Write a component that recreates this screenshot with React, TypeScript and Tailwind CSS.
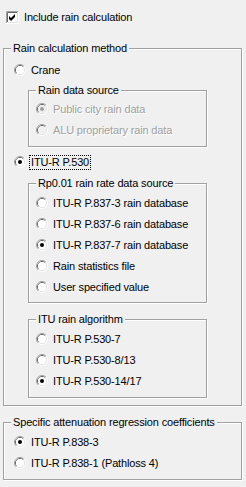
import React from "react";

const font = "font-['Liberation_Sans',Arial,sans-serif] text-[11px] tracking-[-0.15px] leading-[13px]";

const Radio = ({ checked = false, disabled = false }: { checked?: boolean; disabled?: boolean }) => (
  <svg width="13" height="13" viewBox="0 0 13 13" className="shrink-0">
    <path d="M2.11 9.89A5.5 5.5 0 0 1 9.89 2.11" fill="none" stroke="#a0a0a0" />
    <path d="M9.89 2.11A5.5 5.5 0 0 1 2.11 9.89" fill="none" stroke="#ffffff" />
    <path d="M2.82 9.18A4.5 4.5 0 0 1 9.18 2.82" fill="none" stroke="#696969" />
    <path d="M9.18 2.82A4.5 4.5 0 0 1 2.82 9.18" fill="none" stroke="#e3e3e3" />
    <circle cx="6" cy="6" r="4" fill={disabled ? "#f0f0f0" : "#ffffff"} />
    {checked && <circle cx="6" cy="6" r="2" fill={disabled ? "#a0a0a0" : "#000000"} />}
  </svg>
);

const Checkbox = () => (
  <svg width="13" height="13" viewBox="0 0 13 13" className="shrink-0">
    <rect x="0" y="0" width="13" height="13" fill="#ffffff" />
    <path d="M0.5 12V0.5H12" fill="none" stroke="#a0a0a0" />
    <path d="M1.5 11V1.5H11" fill="none" stroke="#696969" />
    <path d="M1.5 11.5H11.5V1" fill="none" stroke="#e3e3e3" />
    <path d="M3 5L5 7L9 3V6L5 10L3 8Z" fill="#000000" />
  </svg>
);

const Option = ({
  label,
  checked,
  disabled,
}: {
  label: string;
  checked?: boolean;
  disabled?: boolean;
}) => (
  <div className="flex items-center h-[21px]">
    <Radio checked={checked} disabled={disabled} />
    <span
      className={`ml-[4px] whitespace-nowrap ${disabled ? "text-[#a0a0a0] [text-shadow:1px_1px_0_#fff]" : "text-black"}`}
    >
      {label}
    </span>
  </div>
);

const Group = ({
  title,
  className,
  children,
}: {
  title: string;
  className: string;
  children: React.ReactNode;
}) => (
  <fieldset
    className={`border border-[#a0a0a0] shadow-[1px_1px_0_#fff,inset_1px_1px_0_#fff] ${className}`}
  >
    <legend className="ml-[7px] px-[2px] bg-[#f0f0f0] whitespace-nowrap">{title}</legend>
    {children}
  </fieldset>
);

export default function App() {
  return (
    <div className={`w-[246px] h-[487px] bg-[#f0f0f0] text-black px-[3px] pt-[7px] overflow-hidden ${font}`}>
      <div className="flex items-center h-[21px] ml-[3px]">
        <Checkbox />
        <span className="ml-[5px] whitespace-nowrap">Include rain calculation</span>
      </div>

      <Group title="Rain calculation method" className="mt-[14px] w-[239px]">
        <div className="pl-[10px] pt-[5px] pb-[7px]">
          <Option label="Crane" />

          <Group title="Rain data source" className="mt-[3px] ml-[14px] w-[179px]">
            <div className="pl-[7px] pt-[2px] pb-[5px]">
              <Option label="Public city rain data" checked disabled />
              <Option label="ALU proprietary rain data" disabled />
            </div>
          </Group>

          <div className="flex items-center h-[21px] mt-[5px]">
            <Radio checked />
            <span className="ml-[2px] px-[1px] border border-dotted border-black whitespace-nowrap">
              ITU-R P.530
            </span>
          </div>

          <Group title="Rp0.01 rain rate data source" className="mt-[4px] ml-[14px] w-[179px]">
            <div className="pl-[7px] pt-[3px] pb-[4px]">
              <Option label="ITU-R P.837-3 rain database" />
              <Option label="ITU-R P.837-6 rain database" />
              <Option label="ITU-R P.837-7 rain database" checked />
              <Option label="Rain statistics file" />
              <Option label="User specified value" />
            </div>
          </Group>

          <Group title="ITU rain algorithm" className="mt-[10px] ml-[14px] w-[179px]">
            <div className="pl-[7px] pt-[3px] pb-[5px]">
              <Option label="ITU-R P.530-7" />
              <Option label="ITU-R P.530-8/13" />
              <Option label="ITU-R P.530-14/17" checked />
            </div>
          </Group>
        </div>
      </Group>

      <Group title="Specific attenuation regression coefficients" className="mt-[10px] w-[239px]">
        <div className="pl-[10px] pt-[3px] pb-[5px]">
          <Option label="ITU-R P.838-3" checked />
          <Option label="ITU-R P.838-1 (Pathloss 4)" />
        </div>
      </Group>
    </div>
  );
}
